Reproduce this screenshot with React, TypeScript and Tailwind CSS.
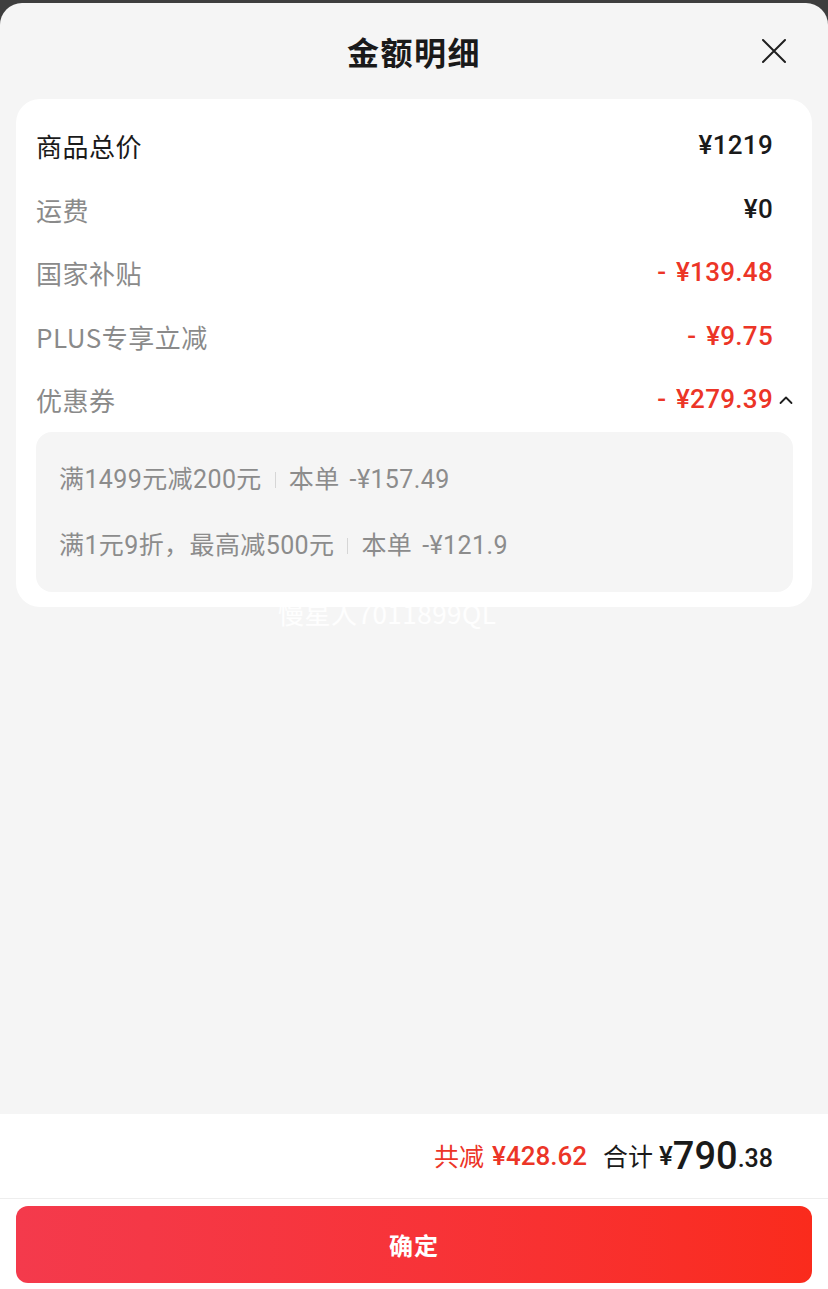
const cjk = "font-['Noto_Sans_CJK_SC',sans-serif]";
const num = "font-['Roboto','Noto_Sans_CJK_SC',sans-serif]";

type Row = { label: string; value: string; strong?: boolean; red?: boolean; open?: boolean };

const rows: Row[] = [
  { label: "商品总价", value: "¥1219", strong: true },
  { label: "运费", value: "¥0" },
  { label: "国家补贴", value: "¥139.48", red: true },
  { label: "PLUS专享立减", value: "¥9.75", red: true },
  { label: "优惠券", value: "¥279.39", red: true, open: true },
];

const coupons = [
  { name: "满1499元减200元", amount: "-¥157.49" },
  { name: "满1元9折，最高减500元", amount: "-¥121.9" },
];

function CloseIcon() {
  return (
    <svg width="26" height="26" viewBox="0 0 26 26" fill="none" stroke="#1f1f1f" strokeWidth="2" strokeLinecap="round">
      <path d="M2 2L24 24M24 2L2 24" />
    </svg>
  );
}

function ChevronUp() {
  return (
    <svg width="14" height="10" viewBox="0 0 14 10" fill="none" stroke="#1f1f1f" strokeWidth="1.8" strokeLinecap="round" strokeLinejoin="round">
      <path d="M1.5 8L7 2.5L12.5 8" />
    </svg>
  );
}

export default function App() {
  return (
    <div className={`relative h-[1289px] bg-[#3e3e3e] pt-[3px] flex flex-col ${cjk}`}>
      <div className="flex-1 flex flex-col bg-[#f5f5f5] rounded-t-[22px] overflow-hidden">
        <div className="relative h-[96px] shrink-0 flex items-center justify-center">
          <h1 className="text-[32px] font-bold text-[#1a1a1a] tracking-[1.5px]">金额明细</h1>
          <button className="absolute right-[41px] top-[35px]">
            <CloseIcon />
          </button>
        </div>

        <div className="mx-4 bg-white rounded-[24px] pl-5 pr-[19px] pt-[15px] pb-[15px]">
          {rows.map((r) => (
            <div key={r.label} className="h-[63.5px] flex items-center">
              <span
                className={`flex-1 text-[26px] tracking-[0.5px] ${r.strong ? "text-[#1a1a1a]" : "text-[#8a8a8a]"}`}
              >
                {r.label}
              </span>
              {r.red && <span className={`${num} text-[26px] font-medium text-[#ec3527] mr-[10px]`}>-</span>}
              <span
                className={`${num} text-[26px] font-medium tracking-[0.3px] ${r.red ? "text-[#ec3527]" : "text-[#1a1a1a]"}`}
              >
                {r.value}
              </span>
              <span className="w-[20px] flex justify-end items-center">{r.open && <ChevronUp />}</span>
            </div>
          ))}
          <div className="bg-[#f5f5f5] rounded-[16px] pl-[23px] pt-[15px] pb-[13px]">
            {coupons.map((c) => (
              <div key={c.name} className="h-[66px] flex items-center text-[25px] text-[#8c8c8c] tracking-[0.4px]">
                <span className={num}>{c.name}</span>
                <span className="mx-[13px] w-px h-[16px] bg-[#d6d6d6]" />
                <span className={num}>
                  本单<span className="ml-[10px]">{c.amount}</span>
                </span>
              </div>
            ))}
          </div>
        </div>
      </div>

      <div className="bg-white">
        <div className="h-[85px] flex items-center justify-end pr-[55px] border-b border-[#eeeeee]">
          <span className="text-[25px] text-[#ec3527]">共减</span>
          <span className={`${num} ml-[8px] text-[26px] font-medium text-[#ec3527]`}>¥428.62</span>
          <span className="ml-[16px] text-[25px] text-[#1a1a1a]">合计</span>
          <span className={`${num} ml-[6px] text-[26px] font-medium text-[#1a1a1a]`}>¥</span>
          <span className={`${num} text-[38px] font-medium text-[#1a1a1a] leading-none`}>790</span>
          <span className={`${num} text-[25px] font-medium text-[#1a1a1a] self-center mt-[6px]`}>.38</span>
        </div>
        <div className="px-4 pt-[7px] pb-[6px]">
          <button className="w-full h-[77px] rounded-[12px] bg-gradient-to-r from-[#f43a4c] to-[#fa2b1c] text-white text-[24px] font-bold tracking-[1px]">
            确定
          </button>
        </div>
      </div>

      <div className="absolute left-[278px] top-[593px] text-[26px] tracking-[0.5px] text-white/90 pointer-events-none">
        慢星人7011899QL
      </div>
    </div>
  );
}
